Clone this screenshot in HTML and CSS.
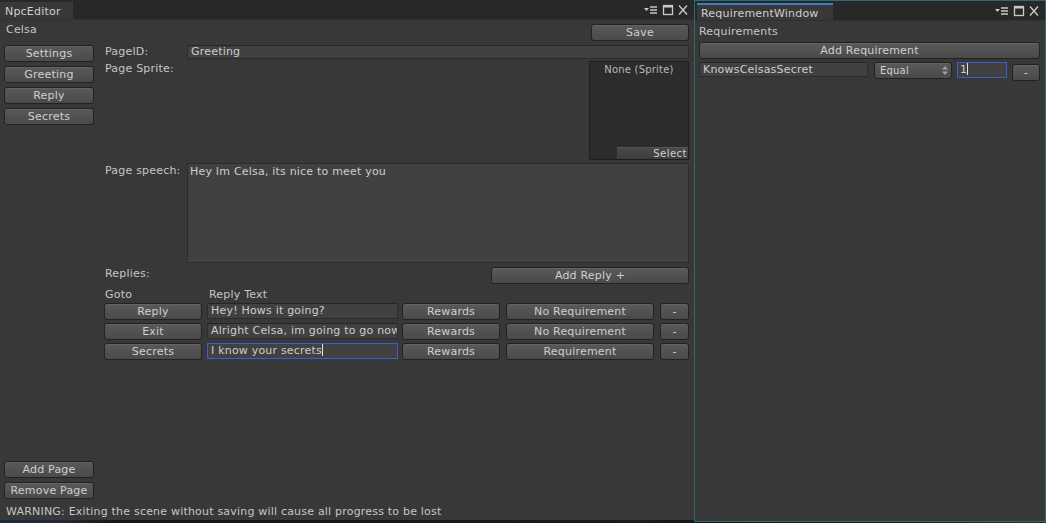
FILE: index.html
```html
<!DOCTYPE html>
<html>
<head>
<meta charset="utf-8">
<link rel="stylesheet" href="styles.css">
</head>
<body>
<div class="screen">
  <section class="win main">
    <div class="tabbar">
      <div class="tab">NpcEditor</div>
      <div class="winicons">
        <svg width="48" height="12" viewBox="0 0 48 12"><path d="M1 4h5l-2.5 3z" fill="#c8c8c8"/><path d="M7 3h7M7 6h7M7 9h7" stroke="#c8c8c8" stroke-width="1.3"/><rect x="20.5" y="1.5" width="9" height="9" fill="none" stroke="#c8c8c8" stroke-width="1.3"/><path d="M20.5 2.5h9" stroke="#c8c8c8" stroke-width="2"/><path d="M36 1.5l8 9M44 1.5l-8 9" stroke="#c8c8c8" stroke-width="1.4"/></svg>
      </div>
    </div>
    <div class="content">
      <div class="header">
        <span class="label">Celsa</span>
        <button class="btn save">Save</button>
      </div>
      <div class="body">
        <div class="sidebar">
          <div class="stack">
            <button class="btn side">Settings</button>
            <button class="btn side">Greeting</button>
            <button class="btn side">Reply</button>
            <button class="btn side">Secrets</button>
          </div>
          <div class="stack">
            <button class="btn side">Add Page</button>
            <button class="btn side">Remove Page</button>
          </div>
        </div>
        <div class="editor">
          <div class="row">
            <span class="label fl">PageID:</span>
            <div class="field grow">Greeting</div>
          </div>
          <div class="row sprite-row">
            <span class="label fl">Page Sprite:</span>
            <div class="sprite">
              <span class="sprite-name">None (Sprite)</span>
              <span class="select">Select</span>
            </div>
          </div>
          <div class="row speech-row">
            <span class="label fl">Page speech:</span>
            <div class="field area grow">Hey Im Celsa, its nice to meet you</div>
          </div>
          <div class="row replies-row">
            <span class="label">Replies:</span>
            <button class="btn addreply">Add Reply +</button>
          </div>
          <div class="row colhead">
            <span class="label goto-h">Goto</span>
            <span class="label">Reply Text</span>
          </div>
          <div class="reply">
            <button class="btn goto">Reply</button>
            <div class="field rtext">Hey! Hows it going?</div>
            <button class="btn rewards">Rewards</button>
            <button class="btn req">No Requirement</button>
            <button class="btn minus">-</button>
          </div>
          <div class="reply">
            <button class="btn goto">Exit</button>
            <div class="field rtext">Alright Celsa, im going to go now</div>
            <button class="btn rewards">Rewards</button>
            <button class="btn req">No Requirement</button>
            <button class="btn minus">-</button>
          </div>
          <div class="reply">
            <button class="btn goto">Secrets</button>
            <div class="field rtext focus">I know your secrets<span class="caret"></span></div>
            <button class="btn rewards">Rewards</button>
            <button class="btn req">Requirement</button>
            <button class="btn minus">-</button>
          </div>
        </div>
      </div>
      <div class="warning">WARNING: Exiting the scene without saving will cause all progress to be lost</div>
    </div>
  </section>
  <section class="win reqwin">
    <div class="tabbar">
      <div class="tab active">RequirementWindow</div>
      <div class="winicons">
        <svg width="48" height="12" viewBox="0 0 48 12"><path d="M1 4h5l-2.5 3z" fill="#c8c8c8"/><path d="M7 3h7M7 6h7M7 9h7" stroke="#c8c8c8" stroke-width="1.3"/><rect x="20.5" y="1.5" width="9" height="9" fill="none" stroke="#c8c8c8" stroke-width="1.3"/><path d="M20.5 2.5h9" stroke="#c8c8c8" stroke-width="2"/><path d="M36 1.5l8 9M44 1.5l-8 9" stroke="#c8c8c8" stroke-width="1.4"/></svg>
      </div>
    </div>
    <div class="content rcontent">
      <span class="label">Requirements</span>
      <button class="btn addreq">Add Requirement</button>
      <div class="reqrow">
        <div class="field rname">KnowsCelsasSecret</div>
        <button class="btn dropdown"><span>Equal</span><svg width="6" height="9" viewBox="0 0 6 9"><path d="M0 3.5L3 0l3 3.5zM0 5.5L3 9l3-3.5z" fill="#a0a0a0"/></svg></button>
        <div class="field rval focus">1<span class="caret"></span></div>
        <button class="btn rminus">-</button>
      </div>
    </div>
  </section>
</div>
<div class="strip"></div>
</body>
</html>
```

FILE: styles.css
```css
* { box-sizing: border-box; }
html, body { margin: 0; padding: 0; }
body {
  width: 1046px;
  height: 523px;
  overflow: hidden;
  background: #1c1f24;
  font-family: "DejaVu Sans", "Liberation Sans", sans-serif;
  font-size: 11px;
  letter-spacing: 0.2px;
  color: #c6c6c6;
}
.screen {
  display: flex;
  height: 520px;
}
.strip {
  height: 3px;
  background: linear-gradient(90deg, #1d2a45 0, #222a3a 60px, #151515 120px, #1a1a1a 640px, #10161a 700px, #223026 1060px);
}
.win {
  display: flex;
  flex-direction: column;
  background: #383838;
  flex: none;
  min-width: 0;
}
.main {
  width: 694px;
}
.reqwin {
  width: 352px;
  height: 522px;
  border: 1px solid #2a6a70;
}
.tabbar {
  height: 20px;
  flex: none;
  background: #282828;
  display: flex;
  align-items: flex-end;
  justify-content: space-between;
  border-bottom: 1px solid #303030;
}
.tab {
  height: 17px;
  padding: 4px 6px 0 5px;
  background: #383838;
  color: #d0d0d0;
  font-size: 11px;
  line-height: 12px;
}
.main .tab { width: 73px; }
.tab.active {
  width: 136px;
  margin-left: 2px;
  height: 17px;
  border-top: 2px solid #3b7fc4;
  padding-top: 3px;
  padding-left: 4px;
}
.winicons {
  align-self: center;
  padding-right: 3px;
  display: flex;
}
.reqwin .winicons { padding-right: 3px; margin-top: 1px; }
.content {
  flex: 1;
  display: flex;
  flex-direction: column;
  padding: 4px 5px 0 4px;
  min-width: 0;
}
.label {
  color: #c6c6c6;
  line-height: 14px;
  white-space: nowrap;
}
.btn {
  font: inherit;
  letter-spacing: 0.2px;
  color: #cfcfcf;
  background: linear-gradient(#595959, #4a4a4a);
  border: 1px solid #222;
  border-radius: 3px;
  box-shadow: inset 0 1px 0 rgba(255,255,255,0.07);
  height: 17px;
  padding: 0;
  line-height: 14px;
  text-align: center;
  white-space: nowrap;
  overflow: hidden;
  flex: none;
}
.field {
  background: #414141;
  border: 1px solid #2c2c2c;
  border-top-color: #262626;
  height: 15px;
  padding: 0 3px;
  line-height: 13px;
  color: #cdcdcd;
  white-space: nowrap;
  overflow: hidden;
  min-width: 0;
}
.field.focus { border-color: #3d5ecf; }
.caret {
  display: inline-block;
  width: 1px;
  height: 12px;
  background: #e0e0e0;
  vertical-align: -2px;
}
.header {
  display: flex;
  justify-content: space-between;
  align-items: flex-start;
  height: 21px;
  padding-left: 2px;
}
.header .label { line-height: 12px; }
.save { width: 98px; }
.body {
  flex: 1;
  display: flex;
  gap: 10px;
  min-width: 0;
}
.sidebar {
  width: 90px;
  flex: none;
  display: flex;
  flex-direction: column;
  justify-content: space-between;
  padding-bottom: 4px;
}
.stack {
  display: flex;
  flex-direction: column;
  gap: 4px;
}
.side { width: 90px; }
.editor {
  width: 585px;
  flex: none;
  display: flex;
  flex-direction: column;
}
.row {
  display: flex;
  align-items: flex-start;
}
.fl {
  width: 83px;
  flex: none;
  padding-left: 1px;
}
.grow { flex: 1; }
.row .field.grow { height: 14px; line-height: 12px; }
.sprite-row {
  margin-top: 2px;
  justify-content: space-between;
  height: 99px;
}
.sprite-row .label { margin-top: 1px; }
.sprite {
  width: 100px;
  height: 99px;
  background: #2c2c2c;
  border: 1px solid #1e1e1e;
  display: flex;
  flex-direction: column;
  justify-content: space-between;
  align-items: center;
  font-size: 10px;
}
.sprite-name { color: #b8b8b8; margin-top: 1px; line-height: 14px; }
.select {
  align-self: flex-end;
  width: 71px;
  height: 12px;
  background: linear-gradient(#4a4a4a, #3c3c3c);
  border-top: 1px solid #555;
  text-align: right;
  padding-right: 1px;
  line-height: 11px;
  color: #cfcfcf;
  letter-spacing: 0.5px;
}
.speech-row { margin-top: 3px; height: 100px; }
.speech-row .label { margin-top: 1px; }
.row .field.area {
  height: 100px;
  padding: 1px 2px;
  line-height: 14px;
  border-top-color: #2a2a2a;
}
.replies-row {
  margin-top: 4px;
  justify-content: space-between;
  height: 17px;
}
.replies-row .label { padding-left: 1px; margin-top: 0; }
.addreply { width: 198px; }
.colhead { margin-top: 3px; height: 16px; align-items: center; }
.goto-h { width: 105px; padding-left: 1px; }
.reply {
  display: flex;
  align-items: flex-start;
  margin-bottom: 3px;
  height: 17px;
}
.goto { width: 98px; }
.rtext { width: 191px; flex: none; margin-left: 5px; height: 16px; }
.rewards { width: 98px; margin-left: 4px; }
.req { width: 148px; margin-left: 6px; }
.minus { width: 29px; margin-left: 6px; }
.warning {
  height: 17px;
  padding-left: 2px;
  line-height: 17px;
  white-space: nowrap;
}
.rcontent {
  padding: 4px 6px 0 4px;
}
.addreq { width: 341px; margin-top: 3px; height: 17px; }
.reqrow {
  display: flex;
  align-items: flex-start;
  margin-top: 3px;
}
.rname { width: 169px; flex: none; height: 15px; }
.dropdown {
  width: 78px;
  margin-left: 6px;
  display: flex;
  justify-content: space-between;
  align-items: center;
  padding: 0 3px 0 5px;
  font-size: 10px;
}
.rval { width: 50px; flex: none; margin-left: 5px; height: 16px; padding-left: 2px; }
.rminus { width: 28px; margin-left: 5px; margin-top: 2px; }
```
